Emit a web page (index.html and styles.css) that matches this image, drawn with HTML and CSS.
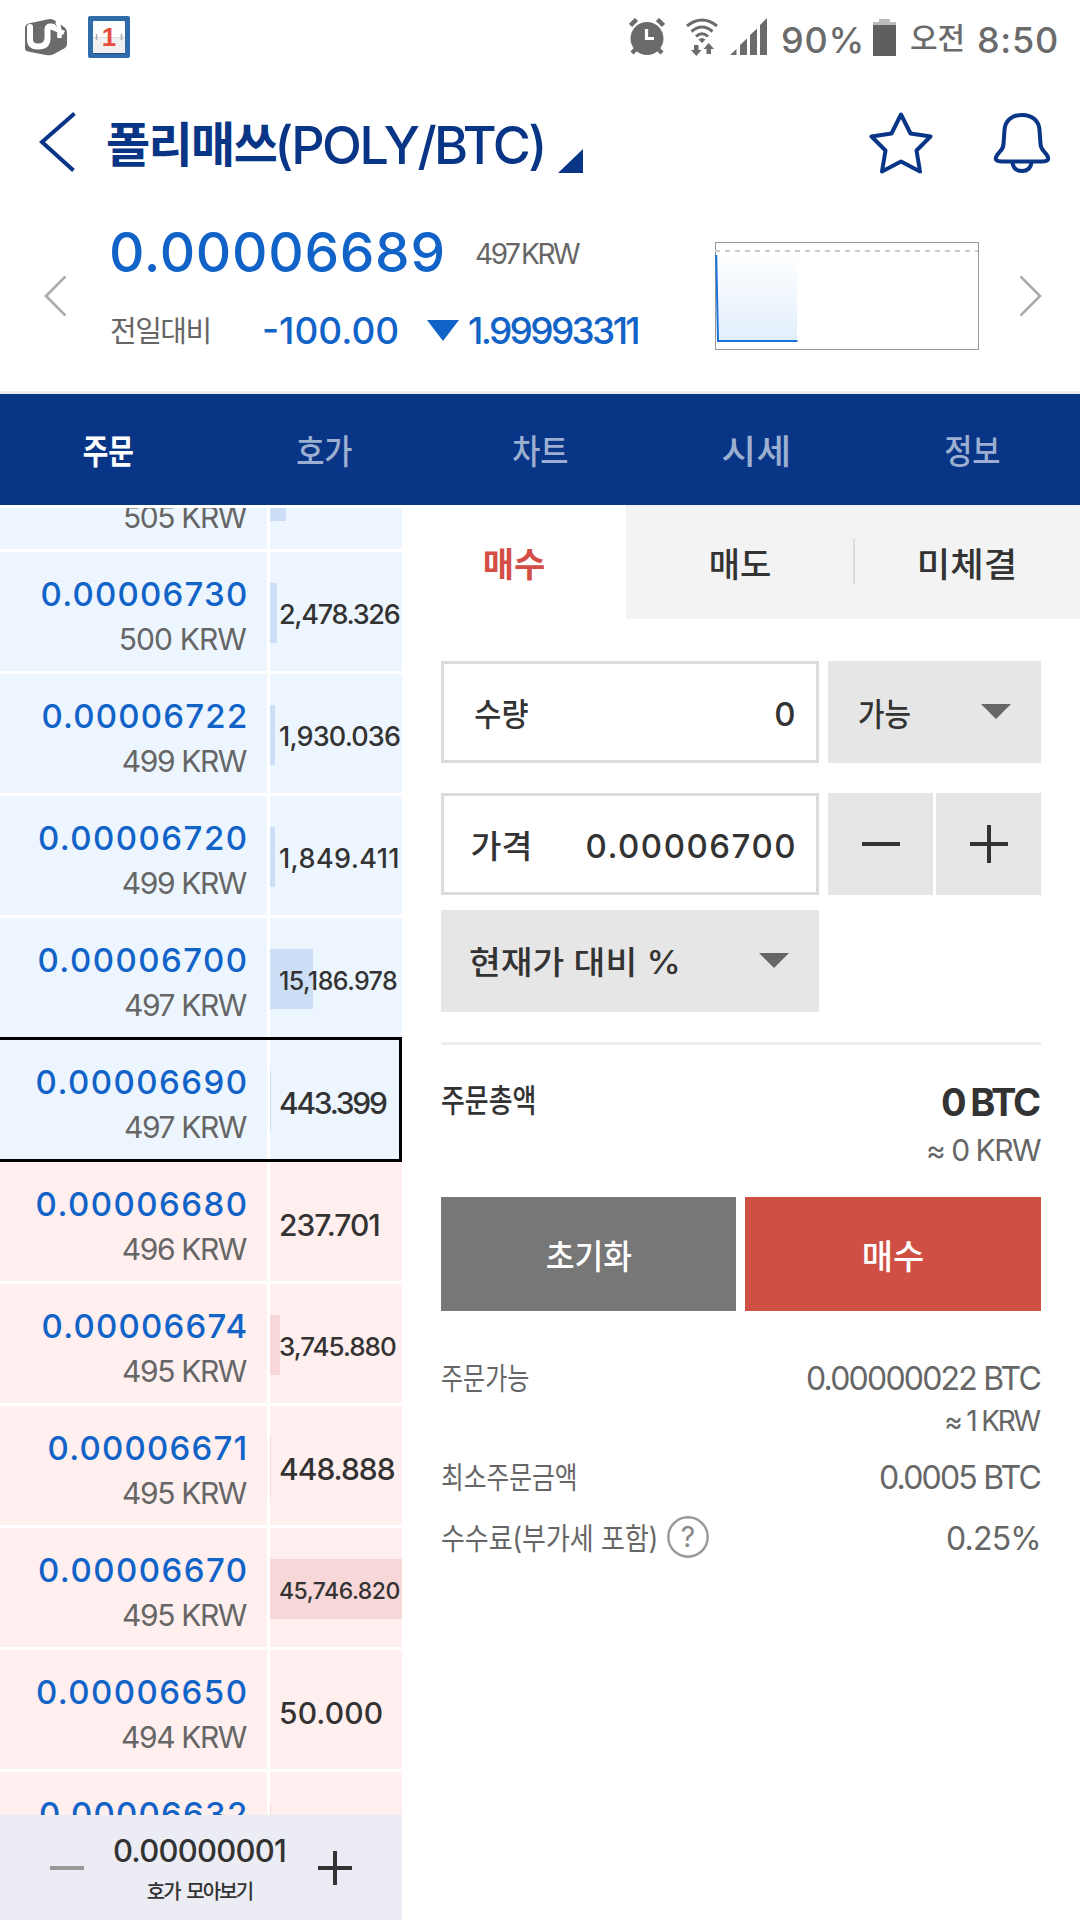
FILE: index.html
```html
<!DOCTYPE html>
<html lang="ko">
<head>
<meta charset="utf-8">
<title>폴리매쓰(POLY/BTC)</title>
<link rel="stylesheet" href="styles.css">
</head>
<body>
<div class="screen">
  <div class="status">
    <svg class="ic-carrier" width="44" height="38" viewBox="0 0 44 38"><path d="M1 10Q1 6.500 4.500 5.500L23 1.500Q27 0.500 30 2L40 9Q43 11 43 14V26Q43 28.500 41 30L30 36Q27 38 22 37L4 33.500Q1 33 1 30Z" fill="#6b6b6b"/><path d="M6 9V21.500Q6 28.500 14 28.500Q23.500 28.500 23.500 20V11Q23.500 8 27 8.500L29 9" fill="none" stroke="#fff" stroke-width="6" stroke-linecap="round" stroke-linejoin="round"/><path d="M33 3.500Q35.500 7 35.500 20M29 10L40 15" fill="none" stroke="#fff" stroke-width="4.500"/></svg>
    <svg class="ic-calendar" width="42" height="42" viewBox="0 0 42 42"><rect width="42" height="42" rx="2" fill="#306ca9"/><rect x="5" y="6" width="32" height="32" rx="1" fill="#1f4f86"/><rect x="5" y="5" width="32" height="32" rx="1" fill="#fefefe"/><rect x="5" y="21" width="32" height="16" fill="#f0f0f0"/><path d="M5 21.500H37" stroke="#ddd"/><path d="M8.500 18V24M33.500 18V24" stroke="#aaa" stroke-width="1.500"/><text class="cal-num" x="21" y="29.500" text-anchor="middle">1</text></svg>
    <svg class="ic-alarm" width="36" height="37" viewBox="0 0 36 37"><circle cx="18" cy="20.500" r="16.500" fill="#6b6b6b"/><path d="M1.500 7.500L7.500 1.500M34.500 7.500L28.500 1.500M7 31L3 35M29 31L33 35" stroke="#6b6b6b" stroke-width="4.500"/><path d="M17.500 11V20.500H25" fill="none" stroke="#fff" stroke-width="3.200"/></svg>
    <svg class="ic-wifi" width="32" height="38" viewBox="0 0 32 38"><g fill="none" stroke="#6b6b6b" stroke-width="3"><path d="M1 8Q16 -4 31 8"/><path d="M5.500 13.500Q16 4.500 26.500 13.500"/><path d="M10 18.500Q16 13 22 18.500"/></g><path d="M12.500 21.500Q16 18.500 19.500 21.500L16 25ZM8 27H12.500V32H15.500L10.300 38L5 32H8ZM20.500 36V31H17.500L22.700 25L28 31H25V36Z" fill="#6b6b6b"/></svg>
    <svg class="ic-signal" width="37" height="37" viewBox="0 0 37 37"><path d="M0 37L6.500 31V37ZM10 27L17 20.500V37H10ZM20 17L27 10.500V37H20ZM30 7L37 0V37H30Z" fill="#6b6b6b"/></svg>
    <span class="battery-text">90%</span>
    <svg class="ic-battery" width="23" height="37" viewBox="0 0 23 37"><path d="M6 0H17V3H23V8H0V3H6Z" fill="#bbb"/><path d="M0 6H23V37H0Z" fill="#5f5f5f"/></svg>
    <span class="ampm">오전</span>
    <span class="clock">8:50</span>
  </div>

  <div class="titlebar">
    <svg class="ic-back" width="38" height="62" viewBox="0 0 38 62"><path d="M35.500 2.500L3 31L34.500 59.500" fill="none" stroke="#083586" stroke-width="4"/></svg>
    <h1 class="title"><span class="title-ko">폴리매쓰</span><span class="title-pair">(POLY/BTC)</span></h1>
    <svg class="ic-corner" width="25" height="24" viewBox="0 0 25 24"><path d="M25 0V24H0Z" fill="#083586"/></svg>
    <svg class="ic-star" width="64" height="62" viewBox="0 0 64 62"><path d="M32 2.500L41.500 21.500L61.500 24.500L47.500 38.500L51 59.500L32 49.500L13 59.500L16.500 38.500L2.500 24.500L22.500 21.500Z" fill="none" stroke="#083586" stroke-width="4" stroke-linejoin="round"/></svg>
    <svg class="ic-bell" width="58" height="62" viewBox="0 0 58 62"><g fill="none" stroke="#083586" stroke-width="4"><path d="M29 3C18 3 12 9.500 11.500 18L10.500 32Q10.300 36 7 39.500L4.500 42.500Q-0.500 49.500 9 49.500H49Q58.500 49.500 53.500 42.500L51 39.500Q47.700 36 47.500 32L46.500 18C46 9.500 40 3 29 3Z"/><path d="M19.500 50.500Q20.500 59 29 59Q37.500 59 38.500 50.500"/></g></svg>
  </div>

  <div class="quote">
    <svg class="ic-prev" width="22" height="42" viewBox="0 0 22 42"><path d="M21.500 1.500L2 21L21.500 40.500" fill="none" stroke="#aaa" stroke-width="2.600"/></svg>
    <div class="quote-info">
      <div class="quote-row quote-top"><span class="last">0.00006689</span><span class="last-krw">497 KRW</span></div>
      <div class="quote-row quote-bottom"><span class="diff-label">전일대비</span><span class="diff-rate">-100.00</span><svg width="32" height="21" viewBox="0 0 32 21"><path d="M0 0H32L16 21Z" fill="#1163c8"/></svg><span class="diff-value">1.99993311</span></div>
    </div>
    <svg class="spark" width="264" height="108" viewBox="0 0 264 108"><defs><linearGradient id="fill" x1="0" y1="0" x2="0" y2="1"><stop offset="0" stop-color="#fff"/><stop offset="1" stop-color="#e1eefb"/></linearGradient></defs><path d="M2 12L3 98H82V12Z" fill="url(#fill)"/><rect x="0.500" y="0.500" width="263" height="107" fill="none" stroke="#999"/><path d="M0 9H263" stroke="#ccc" stroke-width="2" stroke-dasharray="5 5"/><path d="M1.200 13L3 99H82.500" fill="none" stroke="#1a73d6" stroke-width="2"/></svg>
    <svg class="ic-next" width="22" height="42" viewBox="0 0 22 42"><path d="M0.500 1.500L20 21L0.500 40.500" fill="none" stroke="#aaa" stroke-width="2.600"/></svg>
  </div>

  <nav class="nav">
    <a class="nav-item active"><span class="t-jumun">주문</span></a>
    <a class="nav-item"><span class="t-narrow">호가</span></a>
    <a class="nav-item"><span class="t-narrow">차트</span></a>
    <a class="nav-item"><span class="t-wide">시세</span></a>
    <a class="nav-item"><span class="t-narrow">정보</span></a>
  </nav>

  <div class="main">
    <section class="book">
      <div class="book-view">
        <div class="book-list">
          <div class="row ask"><div class="price"><b>0.00006801</b><i>505 KRW</i></div><div class="amount"><s style="width:16px"></s><span class="n7">5,741.027</span></div></div>
          <div class="row ask"><div class="price"><b class="tight">0.00006730</b><i class="loose">500 KRW</i></div><div class="amount"><s style="width:7px"></s><span class="n7">2,478.326</span></div></div>
          <div class="row ask"><div class="price"><b class="tight">0.00006722</b><i>499 KRW</i></div><div class="amount"><s style="width:5px"></s><span class="n7 n7-mid">1,930.036</span></div></div>
          <div class="row ask"><div class="price"><b>0.00006720</b><i>499 KRW</i></div><div class="amount"><s style="width:5px"></s><span class="n7 n7-ones">1,849.411</span></div></div>
          <div class="row ask"><div class="price"><b>0.00006700</b><i>497 KRW</i></div><div class="amount"><s style="width:43px"></s><span class="n8">15,186.978</span></div></div>
          <div class="row ask current"><div class="price"><b>0.00006690</b><i>497 KRW</i></div><div class="amount"><s style="width:1px"></s><span class="n6 n6-tight">443.399</span></div></div>
          <div class="row bid"><div class="price"><b>0.00006680</b><i>496 KRW</i></div><div class="amount"><span class="n6">237.701</span></div></div>
          <div class="row bid"><div class="price"><b class="tight">0.00006674</b><i>495 KRW</i></div><div class="amount"><s style="width:10px"></s><span class="n7 n7-small">3,745.880</span></div></div>
          <div class="row bid"><div class="price"><b class="tight">0.00006671</b><i>495 KRW</i></div><div class="amount"><s style="width:1px"></s><span class="n6">448.888</span></div></div>
          <div class="row bid"><div class="price"><b>0.00006670</b><i>495 KRW</i></div><div class="amount"><s style="width:132px"></s><span class="n8 n8-small">45,746.820</span></div></div>
          <div class="row bid"><div class="price"><b>0.00006650</b><i>494 KRW</i></div><div class="amount"><span class="n5">50.000</span></div></div>
          <div class="row bid"><div class="price"><b class="tight">0.00006632</b></div><div class="amount"><s style="width:1px"></s></div></div>
        </div>
      </div>
      <div class="grouping">
        <svg width="34" height="34" viewBox="0 0 34 34"><path d="M0 17H34" stroke="#999" stroke-width="4"/></svg>
        <div class="grouping-text"><span class="unit">0.00000001</span><span class="unit-label">호가 모아보기</span></div>
        <svg width="34" height="34" viewBox="0 0 34 34"><path d="M0 17H34M17 0V34" stroke="#333" stroke-width="4"/></svg>
      </div>
    </section>

    <section class="order">
      <div class="tabs">
        <a class="tab tab-buy">매수</a>
        <a class="tab tab-sell">매도</a>
        <a class="tab tab-open"><span class="t-open">미체결</span></a>
      </div>
      <div class="form">
        <div class="line">
          <div class="field"><span class="f-label t-qty">수량</span><span class="f-value">0</span></div>
          <div class="select select-small"><span class="t-able">가능</span><svg width="30" height="15" viewBox="0 0 30 15"><path d="M0 0H30L15 15Z" fill="#666"/></svg></div>
        </div>
        <div class="line line-price">
          <div class="field"><span class="f-label t-price">가격</span><span class="f-value">0.00006700</span></div>
          <div class="steppers">
            <button class="step"><svg width="38" height="38" viewBox="0 0 38 38"><path d="M0 19H38" stroke="#333" stroke-width="4"/></svg></button>
            <button class="step"><svg width="38" height="38" viewBox="0 0 38 38"><path d="M0 19H38M19 0V38" stroke="#333" stroke-width="4"/></svg></button>
          </div>
        </div>
        <div class="select select-wide"><span class="t-ratio">현재가 대비 %</span><svg width="30" height="15" viewBox="0 0 30 15"><path d="M0 0H30L15 15Z" fill="#666"/></svg></div>
        <div class="total">
          <span class="total-label">주문총액</span>
          <div class="total-values"><span class="total-btc">0 BTC</span><span class="total-krw">≈ 0 KRW</span></div>
        </div>
        <div class="actions">
          <button class="btn btn-reset"><span class="t-reset">초기화</span></button>
          <button class="btn btn-buy">매수</button>
        </div>
        <div class="info">
          <div class="info-row"><span class="info-label t-avail">주문가능</span><span class="info-value v-long">0.00000022 BTC</span></div>
          <div class="info-row info-sub"><span></span><span class="info-krw">≈ 1 KRW</span></div>
          <div class="info-row info-min"><span class="info-label t-min">최소주문금액</span><span class="info-value v-long">0.0005 BTC</span></div>
          <div class="info-row info-fee"><span class="fee"><span class="info-label t-fee">수수료(부가세 포함)</span><svg class="help" width="42" height="42" viewBox="0 0 42 42"><circle cx="21" cy="21" r="19.700" fill="none" stroke="#999" stroke-width="2.400"/><text class="help-mark" x="21" y="31" text-anchor="middle">?</text></svg></span><span class="info-value">0.25%</span></div>
        </div>
      </div>
    </section>
  </div>
</div>
</body>
</html>
```
FILE: styles.css
```css
* { box-sizing: border-box; margin: 0; padding: 0; }
body { width: 1080px; height: 1920px; overflow: hidden; background: #fff; color: #333; font-family: Inter, "Noto Sans CJK KR", sans-serif; font-weight: 500; }
svg { display: block; flex: none; }
span { display: block; white-space: nowrap; }
button { border: 0; font: inherit; color: inherit; }
.screen { display: flex; flex-direction: column; width: 1080px; height: 1920px; }

/* status bar */
.status { display: flex; align-items: flex-start; height: 76px; padding: 0 0 0 24px; color: #6b6b6b; }
.ic-carrier { margin-top: 18px; }
.ic-calendar { margin: 16px 0 0 20px; }
.cal-num { font: 700 26px "Liberation Sans", sans-serif; fill: #e94b3c; }
.ic-alarm { margin: 18px 0 0 499px; }
.ic-wifi { margin: 18px 0 0 21px; }
.ic-signal { margin: 18px 0 0 12px; }
.battery-text, .ampm, .clock { line-height: 80px; flex: none; }
.battery-text { width: 91px; padding-left: 14px; font-size: 36px; letter-spacing: .8px; }
.ic-battery { margin: 19px 0 0 15px; }
.ampm { width: 81px; padding-left: 14px; font-size: 30px; line-height: 77px; }
.clock { font-size: 36px; letter-spacing: .7px; }

/* title bar */
.titlebar { display: flex; align-items: center; height: 138px; padding: 0 29px 0 39px; color: #083586; }
.ic-back { margin-top: -6px; }
.title { display: flex; align-items: center; width: 451px; padding-left: 29px; line-height: 70px; }
.title-ko { font-size: 48px; font-weight: 700; letter-spacing: -1.600px; }
.title-pair { font-size: 52px; font-weight: 500; letter-spacing: -2.500px; margin-left: -2px; padding-top: 2px; }
.ic-corner { align-self: flex-end; margin: 0 0 41px 30px; }
.ic-star { margin: -4px 0 0 auto; }
.ic-bell { margin: -4px 0 0 60px; }

/* quote summary */
.quote { display: flex; align-items: center; height: 180px; padding: 0 38px 14px 44px; border-bottom: 3px solid #eee; color: #1163c8; }
.quote-info { width: 606px; padding-left: 43px; align-self: flex-start; }
.quote-row { display: flex; align-items: center; }
.quote-top { height: 76px; }
.quote-bottom { height: 80px; }
.last { width: 366px; font-size: 55px; letter-spacing: .7px; }
.last-krw { font-size: 28px; font-weight: 400; color: #666; letter-spacing: -2.400px; word-spacing: -3px; padding-top: 4px; }
.diff-label { width: 153px; padding: 0 0 3px 1px; font-size: 29px; font-weight: 400; color: #666; letter-spacing: -1.500px; }
.diff-rate { width: 165px; font-size: 37px; }
.diff-value { padding-left: 9px; font-size: 37px; letter-spacing: -2.650px; }
.spark { margin-left: 43px; }
.ic-next { margin-left: auto; }

/* main navigation */
.nav { display: grid; grid-template-columns: repeat(5, 1fr); height: 111px; background: #083586; color: #9cafd0; font-size: 34px; }
.nav-item { display: flex; align-items: center; justify-content: center; }
.nav-item.active { color: #fff; font-weight: 700; }
.t-jumun { transform: scaleX(.82); }
.t-narrow { transform: scaleX(.9); }
.t-wide { transform: scaleX(1.120); }

.main { display: flex; flex: 1; }

/* order book */
.book { width: 402px; padding-top: 3px; }
.book-view { height: 1307px; overflow: hidden; }
.book-list { margin-top: -78px; }
.row { display: grid; grid-template-columns: 267px 132px; column-gap: 3px; height: 122px; padding-bottom: 3px; position: relative; }
.ask { --bg: #edf6ff; --bar: #cddff6; }
.bid { --bg: #ffefee; --bar: #f7d7d7; }
.price, .amount { background: var(--bg); }
.price { display: flex; flex-direction: column; align-items: flex-end; padding: 20px 20px 0 0; line-height: 45px; white-space: nowrap; }
.price b { font-size: 33px; font-weight: 500; color: #1163c8; letter-spacing: 1.450px; margin-right: -1.450px; }
.price .tight { letter-spacing: 1.200px; }
.price i { font-size: 30px; font-weight: 400; font-style: normal; color: #666; letter-spacing: -1.400px; margin-right: 1px; }
.price .loose { letter-spacing: -.9px; }
.amount { position: relative; padding: 7px 0 0 9px; line-height: 112px; }
.amount s { position: absolute; left: 0; top: 31px; height: 60px; background: var(--bar); }
.amount span { position: relative; }
.n5 { font-size: 30px; letter-spacing: .1px; }
.n6 { font-size: 30px; letter-spacing: -1px; }
.n6-tight { letter-spacing: -2.260px; }
.n7 { font-size: 27px; letter-spacing: -1.300px; }
.n7-mid { letter-spacing: -.83px; }
.n7-ones { letter-spacing: .4px; }
.n7-small { font-size: 26px; letter-spacing: -1px; }
.n8 { font-size: 25px; letter-spacing: -.58px; }
.n8-small { font-size: 23px; letter-spacing: -.5px; }
.current::after { content: ""; position: absolute; inset: -3px 0 0; border: 3px solid #000; border-left: 0; }
.current { z-index: 1; }

.grouping { display: flex; align-items: center; height: 105px; padding: 0 50px; background: #ecedf4; }
.grouping-text { display: flex; flex-direction: column; align-items: center; width: 234px; padding: 6px 3px 0 0; }
.unit { font-size: 31px; line-height: 42px; letter-spacing: -.75px; }
.unit-label { font-size: 20px; line-height: 40px; letter-spacing: -1.890px; word-spacing: 3px; }

/* order form */
.order { width: 678px; }
.tabs { display: grid; grid-template-columns: 224px 228px 226px; height: 114px; font-size: 34px; }
.tab { display: flex; align-items: center; justify-content: center; background: #f3f3f3; padding-top: 1px; }
.tab-buy { background: #fff; color: #d34f45; font-weight: 700; }
.tab-open { position: relative; }
.tab-open::before { content: ""; position: absolute; left: -1px; top: 34px; width: 2px; height: 45px; background: #dcdcdc; }
.t-open { transform: scaleX(1.070); }
.form { padding: 42px 39px 0; }
.line { display: flex; justify-content: space-between; height: 102px; }
.line-price { margin-top: 30px; }
.field { display: flex; align-items: center; justify-content: space-between; width: 378px; padding: 3px 19px 0 28px; border: 3px solid #dcdcdc; font-size: 33px; }
.f-label, .select span { font-size: 32px; }
.f-label { margin-top: -4px; }
.f-value { letter-spacing: 1.500px; }
.t-qty { transform: scaleX(.92); }
.t-price { transform: scaleX(1.050); }
.select { display: flex; align-items: center; justify-content: space-between; height: 102px; padding: 0 30px; background: #e6e6e6; }
.select svg { margin-top: -2px; }
.select-small { width: 213px; }
.select .t-able { transform: scaleX(.9); transform-origin: left; }
.select-wide { width: 378px; margin-top: 15px; padding-left: 28px; }
.t-ratio { transform: scaleX(1.080); transform-origin: left; margin-top: -2px; }
.steppers { display: flex; gap: 3px; }
.step { display: flex; align-items: center; justify-content: center; width: 105px; background: #e6e6e6; }
.total { display: flex; justify-content: space-between; height: 155px; margin-top: 30px; padding-top: 31px; border-top: 3px solid #eee; }
.total-label { font-size: 32px; line-height: 50px; transform: scaleX(.81); transform-origin: left; }
.total-values { display: flex; flex-direction: column; align-items: flex-end; }
.total-btc { font-size: 38px; font-weight: 700; line-height: 52px; letter-spacing: -2.200px; word-spacing: -1px; margin-right: 2px; }
.total-krw { font-size: 30px; font-weight: 400; line-height: 44px; color: #666; letter-spacing: -1.520px; margin-right: 1px; }
.actions { display: grid; grid-template-columns: 295px 296px; gap: 9px; height: 114px; }
.btn { display: flex; align-items: center; justify-content: center; padding-top: 1px; color: #fff; font-size: 34px; font-weight: 500; }
.btn-reset { background: #777; }
.btn-buy { background: #d04f45; }
.t-reset { transform: scaleX(.92); }
.info { padding-top: 44px; color: #666; }
.info-row { display: flex; align-items: center; justify-content: space-between; height: 46px; font-weight: 400; }
.info-label { font-size: 30px; transform-origin: left; margin-top: -4px; }
.info-value { font-size: 32px; letter-spacing: -.8px; }
.v-long { letter-spacing: -1.800px; margin-right: 1px; }
.info-krw { font-size: 28px; letter-spacing: -2.200px; margin-right: 2px; }
.info-sub { height: 40px; }
.info-min { margin-top: 12px; height: 48px; }
.info-fee { margin-top: 12px; height: 50px; }
.t-avail { transform: scaleX(.8); }
.t-min { transform: scaleX(.825); }
.fee { position: relative; width: 268px; }
.t-fee { transform: scaleX(.865); }
.help { position: absolute; left: 226px; top: 50%; margin-top: -22px; }
.help-mark { font-size: 28px; font-weight: 400; fill: #888; }
```
